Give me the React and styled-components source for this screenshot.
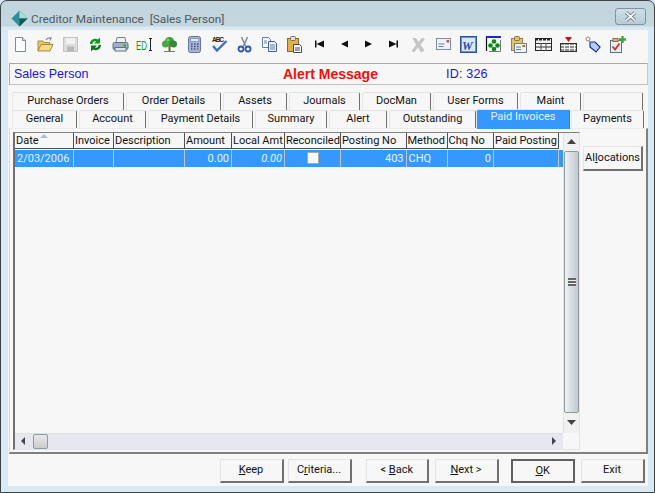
import React from 'react';
import styled, { createGlobalStyle } from 'styled-components';

const GlobalStyle = createGlobalStyle`
  html, body {
    margin: 0;
    padding: 0;
    background: #d6e6f4;
  }
  * {
    box-sizing: border-box;
  }
`;

const UI_FONT = `Roboto, "Open Sans", "Liberation Sans", sans-serif`;

const AppWindow = styled.div`
  width: 655px;
  height: 493px;
  display: flex;
  flex-direction: column;
  border: 1.5px solid #3c4448;
  border-radius: 7px 7px 0 0;
  background: linear-gradient(#c2d4dc 0, #c4d6de 25px, #d8e8f5 26px);
  font-family: ${UI_FONT};
  font-size: 11px;
  color: #111;
  overflow: hidden;
`;

const TitleBar = styled.div`
  height: 28.5px;
  flex: none;
  display: flex;
  align-items: center;
  padding: 6px 8px 0 10px;
`;

const TitleText = styled.div`
  margin-left: 3px;
  margin-top: 2px;
  font-size: 11.8px;
  color: #4c5a62;
  white-space: pre;
`;

const CloseButton = styled.div`
  margin-left: auto;
  width: 31px;
  height: 17px;
  margin-top: -4px;
  display: flex;
  align-items: center;
  justify-content: center;
  border: 1px solid #7f93a8;
  border-radius: 3px;
  background: linear-gradient(#d0dee6, #b8ccd6);
`;

const Content = styled.div`
  flex: 1;
  margin: 0 6px 6px 7px;
  background: #f7f7f7;
  display: flex;
  flex-direction: column;
  min-height: 0;
`;

const Toolbar = styled.div`
  height: 33px;
  flex: none;
  display: flex;
  align-items: center;
  padding: 0 0 3px;
`;

const ToolButton = styled.div`
  width: 24.9px;
  height: 20px;
  flex: none;
  display: flex;
  align-items: center;
  justify-content: center;
`;

const InfoBar = styled.div`
  height: 22px;
  flex: none;
  margin: 0 0 0 1px;
  border: 1px solid #a8a8a8;
  border-right-color: #c8c8c8;
  border-bottom-color: #c0c0c0;
  display: grid;
  grid-template-columns: 269px 163px 1fr;
  align-items: center;
  padding: 1px 0 0 4px;
  font-family: "Liberation Sans", Arial, sans-serif;
`;

const InfoLabel = styled.div`
  font-size: ${p => (p.$bold ? '14px' : '12.5px')};
  font-weight: ${p => (p.$bold ? 700 : 400)};
  color: ${p => p.$color};
  letter-spacing: ${p => p.$spacing ?? 0}px;
`;

const TabArea = styled.div`
  margin-top: 7px;
  padding-left: 4px;
  flex: none;
  display: flex;
  flex-direction: column;
`;

const TabRow = styled.div`
  display: flex;
  height: ${p => p.$height}px;
  align-items: flex-end;
`;

const Tab = styled.div`
  width: ${p => p.$w}px;
  margin-right: ${p => p.$gap ?? 2}px;
  height: ${p => (p.$active ? 20 : 18)}px;
  flex: none;
  display: flex;
  align-items: center;
  justify-content: center;
  padding-bottom: ${p => (p.$active ? 6 : 2)}px;
  white-space: nowrap;
  background: ${p => (p.$active ? '#3399ff' : '#f7f7f7')};
  color: ${p => (p.$active ? '#e8f2fc' : '#111')};
  border-top: 1px solid ${p => (p.$active ? '#dfe8f0' : '#e2e2e2')};
  border-left: 1px solid #e6e6e6;
  border-right: 1.5px solid #707070;
  border-radius: 2px 2px 0 0;
  ${p => p.$active && 'margin-bottom: -1px; position: relative;'}
`;

const Panel = styled.div`
  height: 326px;
  flex: none;
  margin-left: 1px;
  border: 1px solid #d8d8d8;
  border-top-color: #ececec;
  border-right: 2px solid #808080;
  border-bottom: 2px solid #808080;
  padding: 3px 0 0 3px;
  display: flex;
  align-items: flex-start;
`;

const GridBox = styled.div`
  width: 567px;
  height: 318px;
  flex: none;
  border: 1px solid #e4e4e4;
  border-top: 1px solid #808080;
  border-left: 2px solid #707070;
  display: grid;
  grid-template-columns: 1fr 16px;
  grid-template-rows: 1fr 16px;
`;

const GridBody = styled.div`
  min-width: 0;
  overflow: hidden;
`;

const Row = styled.div`
  display: flex;
  height: ${p => p.$height}px;
`;

const HeadCell = styled.div`
  width: ${p => p.$w}px;
  flex: none;
  position: relative;
  display: flex;
  align-items: center;
  padding-left: 1px;
  white-space: nowrap;
  overflow: hidden;
  background: #f7f7f7;
  border-right: 1.5px solid #505050;
  border-bottom: 1.5px solid #505050;
`;

const SortArrow = styled.div`
  position: absolute;
  left: 25px;
  top: 1px;
  width: 0;
  height: 0;
  border-left: 4px solid transparent;
  border-right: 4px solid transparent;
  border-bottom: 4px solid #a9bdd4;
`;

const DataRow = styled(Row)`
  margin-top: 1.5px;
  background: #3399ff;
  color: #eaf3fb;
`;

const DataCell = styled.div`
  width: ${p => p.$w}px;
  flex: none;
  display: flex;
  align-items: center;
  justify-content: ${p => (p.$right ? 'flex-end' : p.$center ? 'center' : 'flex-start')};
  padding: 0 2px;
  font-style: ${p => (p.$italic ? 'italic' : 'normal')};
  border-right: 1px solid #c4c4c4;
  white-space: nowrap;
  overflow: hidden;
`;

const CheckBox = styled.div`
  width: 12px;
  height: 12px;
  background: #f8f8f8;
  border: 1px solid #a8a8a8;
`;

const ScrollV = styled.div`
  background: #f1f1f1;
  border-left: 1px solid #e2e2e2;
  display: flex;
  flex-direction: column;
`;

const ScrollButton = styled.div`
  flex: none;
  height: ${p => p.$size}px;
  display: flex;
  align-items: center;
  justify-content: center;
`;

const ThumbV = styled.div`
  flex: 1;
  display: flex;
  align-items: center;
  justify-content: center;
  border: 1px solid #8f9c9c;
  border-radius: 2px;
  background: linear-gradient(90deg, #f0f2f4, #d6dce2 50%, #c2c8ce);
`;

const Grip = styled.div`
  width: 8px;
  height: 8px;
  background: repeating-linear-gradient(#666 0 2px, #eeeeee 2px 3px);
`;

const ScrollH = styled.div`
  background: #e6e7f0;
  border-top: 1px solid #e0e0e0;
  display: flex;
  align-items: center;
  padding-left: 6px;
`;

const ThumbH = styled.div`
  width: 15px;
  height: 15px;
  margin-left: 7.5px;
  border: 1px solid #8a9aa8;
  border-radius: 2px;
  background: linear-gradient(#e8e8e8, #cccccc);
`;

const ArrowH = styled.div`
  width: 0;
  height: 0;
  border-top: 4px solid transparent;
  border-bottom: 4px solid transparent;
  ${p => (p.$right ? 'border-left: 4px solid #444; margin: 0 7px 0 auto;' : 'border-right: 4px solid #444;')}
`;

const Corner = styled.div`
  background: #f7f7f7;
`;

const SideColumn = styled.div`
  flex: 1;
  display: flex;
  justify-content: flex-start;
  padding: 14.5px 0 0 3px;
`;

const Button = styled.div`
  width: ${p => p.$w}px;
  height: ${p => p.$h}px;
  flex: none;
  margin-left: ${p => p.$ml ?? 0}px;
  display: flex;
  align-items: center;
  justify-content: center;
  padding-bottom: 1px;
  background: #f7f7f7;
  border: 1px solid #e4e4e4;
  border-right: 2px solid #707070;
  border-bottom: 2px solid #707070;
  color: #111;
  ${p => p.$default && 'border: 2px solid #606060;'}
`;

const ButtonLabel = styled.span`
  white-space: pre;
`;

const Footer = styled.div`
  flex: 1;
  display: flex;
  align-items: flex-start;
  padding: 5px 0 0 211.5px;
`;

const Key = styled.span`
  text-decoration: underline;
`;

/* toolbar drawings, all on a 17 unit box */
const Ico = ({ children }) => (
  <svg width="17" height="17" viewBox="0 0 17 17">{children}</svg>
);

const icons = [
  <Ico key="new"><path d="M3.500 1.500h7l3 3v11h-10z" fill="#fbfdff" stroke="#7f8a9a" /><path d="M10.500 1.500v3h3" fill="#d5deea" stroke="#7f8a9a" /></Ico>,
  <Ico key="open"><path d="M1 15V5h5l1 1.500h6V9" fill="#e8c86c" stroke="#a98a3a" /><path d="M1 15l3-6.500h12L13 15z" fill="#f4d98a" stroke="#a98a3a" /><path d="M9 4c1-2 3-2.500 5-2l-1 2.500" fill="none" stroke="#7d8fa0" strokeWidth="1.300" /></Ico>,
  <Ico key="save"><rect x="1.500" y="1.500" width="14" height="14" fill="#dcdcdc" stroke="#c4c4c4" /><rect x="4" y="2" width="9" height="6" fill="#f2f2f2" /><rect x="5" y="10.500" width="7" height="5" fill="#b8b8b8" /></Ico>,
  <Ico key="refresh"><path d="M3 8c0-4 4-6.500 8-4.500L13 1.500v6H7l2-2C7 4.800 5.500 6 5.500 8z" fill="#0a9a1e" /><path d="M14 9c0 4-4 6.500-8 4.500L4 15.500v-6h6l-2 2c2 .7 3.500-.5 3.500-2.500z" fill="#067a16" /></Ico>,
  <Ico key="print"><path d="M5 1.500h8l1 5H4z" fill="#eef2f6" stroke="#6f8296" /><rect x="1" y="6.500" width="15" height="7" rx="1.500" fill="#9fb0c2" stroke="#5f7286" /><rect x="3" y="11.500" width="11" height="3.500" fill="#dfe6ee" stroke="#5f7286" /><rect x="11.500" y="8.500" width="2.500" height="2" fill="#22b03a" /></Ico>,
  <Ico key="ed"><text x="0" y="13.500" fontFamily="Liberation Sans Narrow, Liberation Sans, sans-serif" fontSize="12" fill="#0f9a20" textLength="11" lengthAdjust="spacingAndGlyphs">ED</text><path d="M13 2.500h3M14.500 2.500v12M13 14.500h3" stroke="#222" fill="none" /></Ico>,
  <Ico key="tree"><rect x="7.500" y="9" width="2" height="6" fill="#7a5a2e" /><path d="M3 15.500h11" stroke="#5f8f3f" /><circle cx="8.500" cy="5.500" r="4.500" fill="#3f9a3f" /><circle cx="4.500" cy="8" r="3.500" fill="#4aa844" /><circle cx="12.500" cy="8" r="3.500" fill="#348a36" /><circle cx="7" cy="4" r="1.500" fill="#86cc6c" /></Ico>,
  <Ico key="calc"><rect x="2.500" y="0.500" width="12" height="16" rx="2" fill="#a9b6d6" stroke="#6274a0" /><rect x="4.500" y="2.500" width="8" height="3" fill="#e8f0fa" stroke="#6274a0" strokeWidth=".6" /><path d="M5 8h1.500M8 8h1.500M11 8h1.500M5 10.500h1.500M8 10.500h1.500M11 10.500h1.500M5 13h1.500M8 13h1.500" stroke="#3c4f86" strokeWidth="1.500" /><path d="M11 13h1.500" stroke="#d04030" strokeWidth="1.500" /></Ico>,
  <Ico key="abc"><text x="1" y="6" fontFamily="Liberation Sans, sans-serif" fontWeight="700" fontSize="6.500" fill="#222" textLength="12">ABC</text><path d="M2 10l4 4.500L15.500 5" fill="none" stroke="#3f6fc4" strokeWidth="2.400" /></Ico>,
  <Ico key="cut"><path d="M5.500 1l4 9M11.500 1l-4 9" stroke="#7d8794" strokeWidth="1.500" /><circle cx="5" cy="13" r="2.500" fill="none" stroke="#2a55b8" strokeWidth="1.800" /><circle cx="12" cy="13" r="2.500" fill="none" stroke="#2a55b8" strokeWidth="1.800" /></Ico>,
  <Ico key="copy"><path d="M1.500 1.500h6l2 2v8h-8z" fill="#fff" stroke="#5f7fb0" /><path d="M7.500 5.500h6l2 2v8h-8z" fill="#eef3fa" stroke="#3f5f98" /><path d="M9 9h5M9 11h5M9 13h5M3 5h3M3 7h3" stroke="#5f7fb0" /></Ico>,
  <Ico key="paste"><rect x="1.500" y="2.500" width="11" height="13" fill="#e4b04c" stroke="#8a6a28" /><rect x="4.500" y="0.500" width="5" height="4" rx="1" fill="#dfe4ea" stroke="#6c6c6c" /><path d="M7.500 8.500h6l2 2v6h-8z" fill="#fafafa" stroke="#404a5a" /><path d="M9 12h5M9 14h5" stroke="#404a5a" /></Ico>,
  <Ico key="first"><path d="M4 4.500h1.500v7H4zM13 4.500v7L5.500 8z" fill="#111" /></Ico>,
  <Ico key="prev"><path d="M12 4.500v7L5 8z" fill="#111" /></Ico>,
  <Ico key="next"><path d="M5 4.500v7L12 8z" fill="#111" /></Ico>,
  <Ico key="last"><path d="M4 4.500v7L11.500 8zM11.500 4.500H13v7h-1.500z" fill="#111" /></Ico>,
  <Ico key="x"><path d="M2.500 2h3.500l2.500 4L12 1.500l3 1.500-4.500 5.500 4 6-3.500 2-3-5-4 5-2.500-1.500 4.500-6z" fill="#c6c6c6" /></Ico>,
  <Ico key="mail"><rect x="1.500" y="2.500" width="14" height="11" fill="#eef3f9" stroke="#7c8ea4" /><rect x="11.500" y="4" width="2.500" height="2.500" fill="#d85040" /><path d="M3.500 8h6M3.500 10.500h5" stroke="#6c8098" /></Ico>,
  <Ico key="word"><rect x="0.500" y="0.500" width="16" height="16" fill="#5f95d8" stroke="#2a5496" /><rect x="2" y="2" width="13" height="13" fill="#d8e8f8" /><text x="2" y="13.500" fontFamily="Liberation Serif, serif" fontStyle="italic" fontWeight="700" fontSize="12" fill="#1f4f9c">W</text></Ico>,
  <Ico key="flower"><path d="M1.500 15V1.500H15" fill="none" stroke="#111" strokeWidth="1.200" /><path d="M1 1h15" stroke="#1a2ad0" strokeWidth="2" /><path d="M15.500 4v11.500H4" fill="none" stroke="#777" /><circle cx="9" cy="5.500" r="2.300" fill="#0a8a1a" /><circle cx="5.500" cy="9.500" r="2.300" fill="#0a8a1a" /><circle cx="12.500" cy="9.500" r="2.300" fill="#0a8a1a" /><circle cx="9" cy="13" r="2.300" fill="#0a8a1a" /></Ico>,
  <Ico key="pastemail"><rect x="1.500" y="2.500" width="11" height="12" fill="#e8c070" stroke="#a0803c" /><rect x="4.500" y="0.500" width="5" height="4" rx="1" fill="#d8c090" stroke="#8a7040" /><rect x="4.500" y="7.500" width="12" height="9" fill="#eef3f9" stroke="#6c8098" /><rect x="12.500" y="9" width="2.500" height="2" fill="#d85040" /><path d="M6 11h5M6 13.500h5" stroke="#6c8098" /></Ico>,
  <Ico key="grid"><rect x="0.500" y="2.500" width="16" height="12" fill="#f4f4f4" stroke="#222" /><path d="M0 3.500h17" stroke="#222" strokeWidth="2" strokeDasharray="3 1" /><path d="M0 7.500h17M0 11h17" stroke="#333" /><path d="M6 7v8M11 7v8" stroke="#555" /></Ico>,
  <Ico key="gridarrow"><rect x="0.500" y="7.500" width="16" height="8" fill="#f0f0f0" stroke="#333" /><path d="M0 8h17M0 11h17M0 14h17" stroke="#333" strokeDasharray="4 1" /><path d="M5.500 1h6v1.500H11L8.500 6 6 2.500h-.5z" fill="#c01818" /></Ico>,
  <Ico key="tag"><path d="M6 6l5 0 5 5-4 5-6-5z" fill="#b8cdf0" stroke="#1a2ea0" strokeWidth="1.200" /><circle cx="4" cy="3" r="2" fill="none" stroke="#888" /><path d="M5 4.500l3 3" stroke="#888" /></Ico>,
  <Ico key="checkadd"><rect x="1.500" y="4.500" width="11" height="12" fill="#e8eef6" stroke="#5c7088" /><rect x="4" y="2.500" width="5" height="3" fill="#d8b878" stroke="#8a7040" /><path d="M3.500 10.500l2.500 3 4.500-6" fill="none" stroke="#d03030" strokeWidth="1.800" /><path d="M13.500 0v7M10 3.500h7" stroke="#3aa83a" strokeWidth="2.400" /></Ico>,
];

const topTabs = [
  ['Purchase Orders', 112], ['Order Details', 95], ['Assets', 64], ['Journals', 71],
  ['DocMan', 69], ['User Forms', 85], ['Maint', 61], ['', 60],
];

const bottomTabs = [
  ['General', 65, 2], ['Account', 67, 2], ['Payment Details', 105, 2], ['Summary', 72, 2],
  ['Alert', 58, 2], ['Outstanding', 87, 0], ['Paid Invoices', 94, 1], ['Payments', 73, 0],
];

const columns = [
  { title: 'Date', w: 59, value: '2/03/2006' },
  { title: 'Invoice', w: 40 },
  { title: 'Description', w: 71 },
  { title: 'Amount', w: 47, value: '0.00', right: true },
  { title: 'Local Amt', w: 53, value: '0.00', right: true, italic: true },
  { title: 'Reconciled', w: 56, check: true },
  { title: 'Posting No', w: 65.5, value: '403', right: true },
  { title: 'Method', w: 41, value: 'CHQ' },
  { title: 'Chq No', w: 46.5, value: '0', right: true },
  { title: 'Paid Posting', w: 65 },
];

function App() {
  return (
    <>
      <GlobalStyle />
      <AppWindow>
        <TitleBar>
          <svg width="17" height="17" viewBox="0 0 17 17">
            <path d="M8.500 .5L16.500 8.500 8.500 16.500 .5 8.500z" fill="#2f8f96" />
            <path d="M8.500 .5L16.500 8.500H8.500z" fill="#a8e0dc" />
            <path d="M8.500 8.500H16.500L8.500 16.500z" fill="#16565e" />
          </svg>
          <TitleText>Creditor Maintenance  [Sales Person]</TitleText>
          <CloseButton>
            <svg width="13" height="11" viewBox="0 0 13 11">
              <path d="M2 1.500l9 8M11 1.500l-9 8" stroke="#5a6a74" strokeWidth="3.400" />
              <path d="M2 1.500l9 8M11 1.500l-9 8" stroke="#f4f6f8" strokeWidth="1.800" />
            </svg>
          </CloseButton>
        </TitleBar>
        <Content>
          <Toolbar>
            {icons.map(icon => (
              <ToolButton key={icon.key}>{icon}</ToolButton>
            ))}
          </Toolbar>
          <InfoBar>
            <InfoLabel $color="#1a10e0">Sales Person</InfoLabel>
            <InfoLabel $color="#f01010" $bold>Alert Message</InfoLabel>
            <InfoLabel $color="#1a10e0" $spacing={0.2}>ID: 326</InfoLabel>
          </InfoBar>
          <TabArea>
            <TabRow $height={18}>
              {topTabs.map(([label, w]) => (
                <Tab key={label || 'blank'} $w={w}>{label}</Tab>
              ))}
            </TabRow>
            <TabRow $height={18}>
              {bottomTabs.map(([label, w, gap]) => (
                <Tab key={label} $w={w} $gap={gap} $active={label === 'Paid Invoices'}>{label}</Tab>
              ))}
            </TabRow>
          </TabArea>
          <Panel>
            <GridBox>
              <GridBody>
                <Row $height={16}>
                  {columns.map(col => (
                    <HeadCell key={col.title} $w={col.w}>
                      {col.title}
                      {col.title === 'Date' && <SortArrow />}
                    </HeadCell>
                  ))}
                </Row>
                <DataRow $height={16.5}>
                  {columns.map(col => (
                    <DataCell key={col.title} $w={col.w} $right={col.right} $italic={col.italic} $center={col.check}>
                      {col.check ? <CheckBox /> : col.value}
                    </DataCell>
                  ))}
                </DataRow>
              </GridBody>
              <ScrollV>
                <ScrollButton $size={18}>
                  <svg width="9" height="5" viewBox="0 0 9 5"><path d="M0 5L4.500 0 9 5z" fill="#444" /></svg>
                </ScrollButton>
                <ThumbV><Grip /></ThumbV>
                <ScrollButton $size={20}>
                  <svg width="9" height="5" viewBox="0 0 9 5"><path d="M0 0L4.500 5 9 0z" fill="#444" /></svg>
                </ScrollButton>
              </ScrollV>
              <ScrollH>
                <ArrowH />
                <ThumbH />
                <ArrowH $right />
              </ScrollH>
              <Corner />
            </GridBox>
            <SideColumn>
              <Button $w={60} $h={25}><ButtonLabel>Al<Key>l</Key>ocations</ButtonLabel></Button>
            </SideColumn>
          </Panel>
          <Footer>
            <Button $w={64} $h={24.5}><ButtonLabel><Key>K</Key>eep</ButtonLabel></Button>
            <Button $w={64} $h={24.5} $ml={4}><ButtonLabel>C<Key>r</Key>iteria...</ButtonLabel></Button>
            <Button $w={63.5} $h={24.5} $ml={14}><ButtonLabel>&lt; <Key>B</Key>ack</ButtonLabel></Button>
            <Button $w={64} $h={24.5} $ml={5.5}><ButtonLabel><Key>N</Key>ext &gt;</ButtonLabel></Button>
            <Button $w={64.5} $h={24.5} $ml={12} $default><ButtonLabel><Key>O</Key>K</ButtonLabel></Button>
            <Button $w={64} $h={24.5} $ml={5.5}><ButtonLabel>Exit</ButtonLabel></Button>
          </Footer>
        </Content>
      </AppWindow>
    </>
  );
}

export default App;
